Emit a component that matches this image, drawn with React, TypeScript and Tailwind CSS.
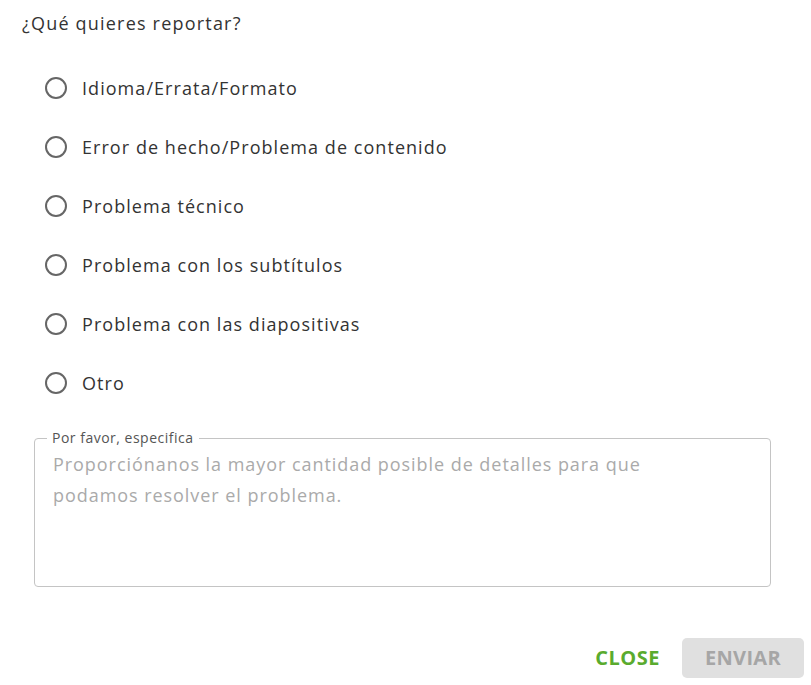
const options = [
  'Idioma/Errata/Formato',
  'Error de hecho/Problema de contenido',
  'Problema técnico',
  'Problema con los subtítulos',
  'Problema con las diapositivas',
  'Otro',
]

export default function App() {
  return (
    <div className="w-[811px] h-[685px] bg-white text-[#333] font-['Open_Sans',sans-serif] relative">
      <div className="pl-[22px] pt-[11px]">
        <p className="text-[18px] leading-6 tracking-[1.2px]">¿Qué quieres reportar?</p>
        <div className="mt-[41px] pl-[23px] flex flex-col gap-[35px]">
          {options.map((o) => (
            <label key={o} className="flex items-center h-6 cursor-pointer">
              <span className="w-[22px] h-[22px] rounded-full border-2 border-[#666] shrink-0" />
              <span className="ml-[15px] text-[18px] leading-6 tracking-[1.05px] text-[#333]">{o}</span>
            </label>
          ))}
        </div>
      </div>
      <fieldset className="mx-[34px] mt-[35px] w-[737px] h-[157px] border border-[#c4c4c4] rounded-[4px] pl-[18px] pr-[80px] pb-2">
        <legend className="px-[5px] ml-[-6px] text-[14px] tracking-[0.5px] text-[#555] leading-4">Por favor, especifica</legend>
        <textarea
          className="w-full h-[120px] resize-none outline-none text-[18px] leading-[31px] tracking-[0.95px] text-[#333] placeholder:text-[#aaa] mt-[3px]"
          placeholder="Proporciónanos la mayor cantidad posible de detalles para que podamos resolver el problema."
        />
      </fieldset>
      <div className="flex justify-end items-center gap-[22px] pr-[7px] mt-[51px]">
        <button className="text-[20px] font-bold text-[#5aab2e] tracking-[0.5px]">CLOSE</button>
        <button className="w-[122px] h-10 rounded-[5px] bg-[#e0e0e0] text-[20px] font-bold text-[#a6a6a6] tracking-[0.3px]">
          ENVIAR
        </button>
      </div>
    </div>
  )
}
